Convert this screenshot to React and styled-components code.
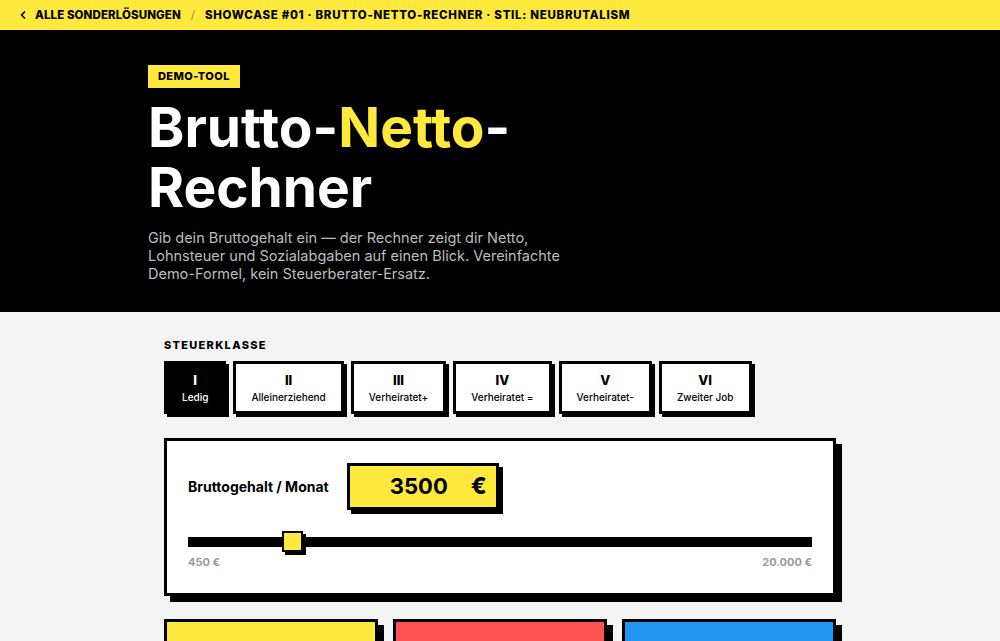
import { useState } from 'react';
import styled, { createGlobalStyle } from 'styled-components';
import { ChevronLeft } from 'lucide-react';

const YELLOW = '#ffe93d';

const GlobalStyle = createGlobalStyle`
  body {
    margin: 0;
    background: #f4f4f4;
    font-family: Inter, "Liberation Sans", sans-serif;
    color: #000;
  }
  * { box-sizing: border-box; }
`;

const TopBar = styled.nav`
  height: 30px;
  background: ${YELLOW};
  display: flex;
  align-items: center;
  padding-left: 17px;
  gap: 8px;
  font-size: 11.5px;
  font-weight: 800;
  text-transform: uppercase;
`;

const BackLink = styled.a`
  display: flex;
  align-items: center;
  gap: 6px;
  color: #000;
  text-decoration: none;
  letter-spacing: 0.1px;
`;

const Sep = styled.span`
  color: #9c8f2a;
  font-weight: 400;
  margin: 0 2px;
`;

const Crumb = styled.span`
  letter-spacing: 0.7px;
`;

const Hero = styled.header`
  background: #000;
  padding: 34px 0 29px;
`;

const HeroInner = styled.div`
  width: 704px;
  margin: 0 auto;
`;

const Badge = styled.span`
  display: inline-flex;
  align-items: center;
  height: 23px;
  padding: 0 10px;
  background: ${YELLOW};
  font-size: 11px;
  font-weight: 800;
  letter-spacing: 0.4px;
`;

const Title = styled.h1`
  margin: 9px 0 0;
  font-size: 55px;
  line-height: 60px;
  font-weight: 700;
  color: #fff;
`;

const Accent = styled.span`
  color: ${YELLOW};
`;

const Lead = styled.p`
  margin: 12px 0 0;
  max-width: 420px;
  font-size: 14.5px;
  line-height: 18px;
  color: #bdbdbd;
`;

const Main = styled.main`
  width: 672px;
  margin: 0 auto;
  padding: 26px 0 40px;
`;

const SectionLabel = styled.div`
  font-size: 11px;
  font-weight: 800;
  letter-spacing: 1.3px;
  margin-bottom: 9px;
`;

const Tabs = styled.div`
  display: flex;
  gap: 7px;
  margin-bottom: 24px;
`;

const Tab = styled.button`
  display: flex;
  flex-direction: column;
  align-items: center;
  gap: 2px;
  padding: 8px 15px 7px;
  border: 3px solid #000;
  box-shadow: 3px 3px 0 #000;
  background: ${p => (p.$active ? '#000' : '#fff')};
  color: ${p => (p.$active ? '#fff' : '#000')};
  font-family: inherit;
  cursor: pointer;
`;

const Numeral = styled.span`
  font-size: 13px;
  font-weight: 800;
  line-height: 16px;
`;

const TabText = styled.span`
  font-size: 10px;
  font-weight: 500;
  line-height: 14px;
  white-space: nowrap;
`;

const Card = styled.section`
  background: #fff;
  border: 3px solid #000;
  box-shadow: 6px 6px 0 #000;
  padding: 22px 21px 24px;
`;

const InputRow = styled.div`
  display: flex;
  align-items: center;
  gap: 18px;
`;

const FieldLabel = styled.label`
  font-size: 14px;
  font-weight: 700;
`;

const MoneyBox = styled.div`
  width: 152px;
  height: 47px;
  display: flex;
  align-items: center;
  gap: 21px;
  padding: 0 9px 0 8px;
  background: ${YELLOW};
  border: 3px solid #000;
  box-shadow: 4px 4px 0 #000;
`;

const MoneyInput = styled.input`
  flex: 1;
  min-width: 0;
  border: 0;
  background: transparent;
  text-align: right;
  font-family: inherit;
  font-size: 22px;
  font-weight: 700;
  color: #000;
  outline: none;
`;

const Euro = styled.span`
  font-size: 23px;
  font-weight: 800;
`;

const Range = styled.input`
  -webkit-appearance: none;
  appearance: none;
  display: block;
  width: 100%;
  height: 24px;
  margin: 20px 0 0;
  background: transparent;

  &::-webkit-slider-runnable-track {
    height: 10px;
    background: #000;
  }
  &::-webkit-slider-thumb {
    -webkit-appearance: none;
    width: 21px;
    height: 21px;
    margin-top: -6px;
    background: ${YELLOW};
    border: 2px solid #000;
    box-shadow: 3px 3px 0 #000;
  }
`;

const RangeScale = styled.div`
  display: flex;
  justify-content: space-between;
  margin-top: 1px;
  font-size: 11px;
  font-weight: 700;
  color: #9a9a9a;
`;

const Results = styled.div`
  display: grid;
  grid-template-columns: repeat(3, 1fr);
  gap: 15px;
  margin-top: 23px;
`;

const ResultCard = styled.div`
  height: 130px;
  background: ${p => p.$bg};
  border: 3px solid #000;
  box-shadow: 6px 6px 0 #000;
`;

const classes = [
  ['I', 'Ledig'],
  ['II', 'Alleinerziehend'],
  ['III', 'Verheiratet+'],
  ['IV', 'Verheiratet ='],
  ['V', 'Verheiratet-'],
  ['VI', 'Zweiter Job'],
];

export default function App() {
  const [klasse, setKlasse] = useState('I');
  const [brutto, setBrutto] = useState(3500);

  return (
    <>
      <GlobalStyle />
      <TopBar>
        <BackLink href="#">
          <ChevronLeft size={12} strokeWidth={3.5} />
          Alle Sonderlösungen
        </BackLink>
        <Sep>/</Sep>
        <Crumb>Showcase #01 · Brutto-Netto-Rechner · Stil: Neubrutalism</Crumb>
      </TopBar>

      <Hero>
        <HeroInner>
          <Badge>DEMO-TOOL</Badge>
          <Title>
            Brutto-<Accent>Netto</Accent>-<br />
            Rechner
          </Title>
          <Lead>
            Gib dein Bruttogehalt ein — der Rechner zeigt dir Netto,
            Lohnsteuer und Sozialabgaben auf einen Blick. Vereinfachte
            Demo-Formel, kein Steuerberater-Ersatz.
          </Lead>
        </HeroInner>
      </Hero>

      <Main>
        <SectionLabel>STEUERKLASSE</SectionLabel>
        <Tabs>
          {classes.map(([num, label]) => (
            <Tab key={num} $active={klasse === num} onClick={() => setKlasse(num)}>
              <Numeral>{num}</Numeral>
              <TabText>{label}</TabText>
            </Tab>
          ))}
        </Tabs>

        <Card>
          <InputRow>
            <FieldLabel htmlFor="brutto">Bruttogehalt / Monat</FieldLabel>
            <MoneyBox>
              <MoneyInput
                id="brutto"
                value={brutto}
                onChange={e => setBrutto(Number(e.target.value) || 0)}
              />
              <Euro>€</Euro>
            </MoneyBox>
          </InputRow>
          <Range
            type="range"
            min={450}
            max={20000}
            step={50}
            value={brutto}
            onChange={e => setBrutto(Number(e.target.value))}
          />
          <RangeScale>
            <span>450 €</span>
            <span>20.000 €</span>
          </RangeScale>
        </Card>

        <Results>
          <ResultCard $bg={YELLOW} />
          <ResultCard $bg="#ff5252" />
          <ResultCard $bg="#2196f3" />
        </Results>
      </Main>
    </>
  );
}
